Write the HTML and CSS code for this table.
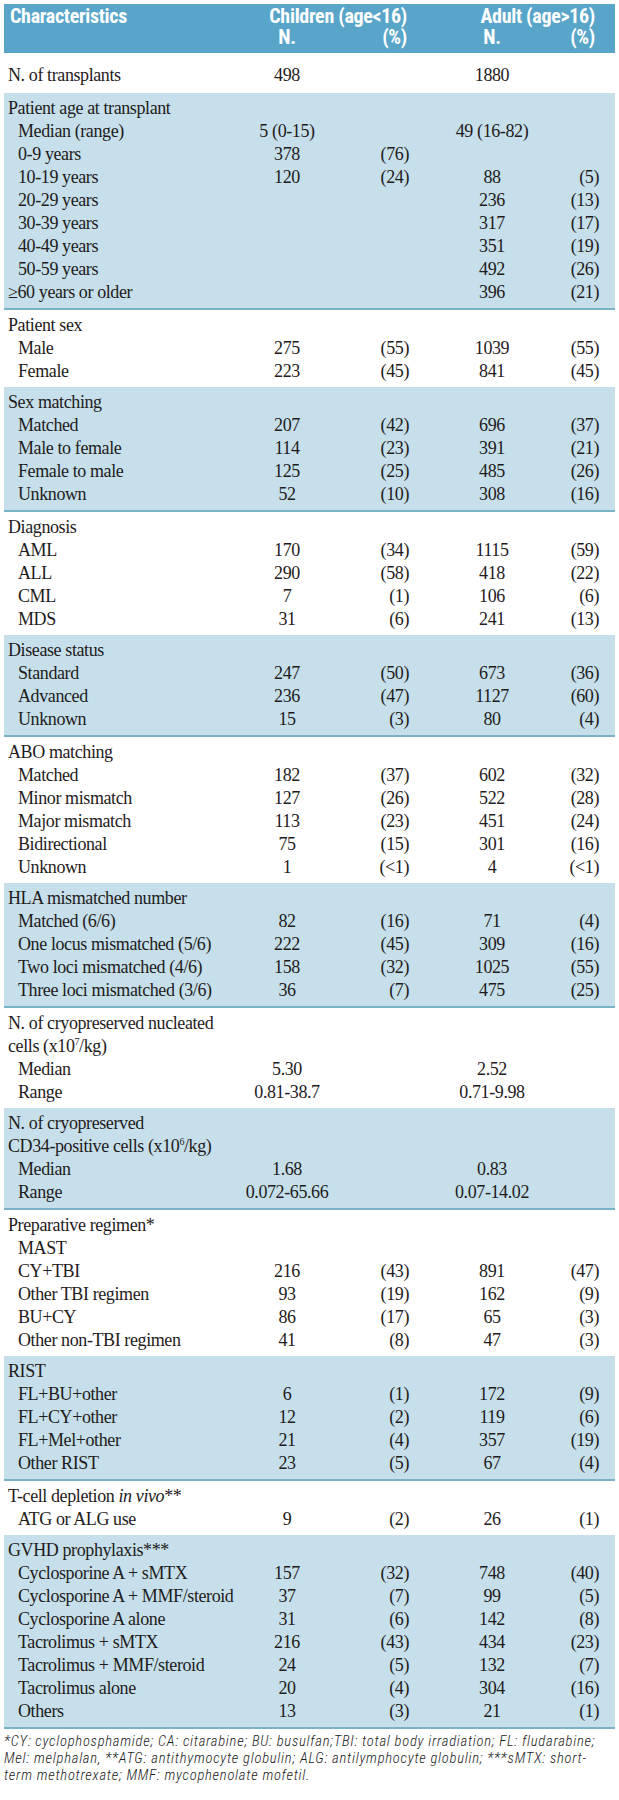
FILE: index.html
```html
<!DOCTYPE html>
<html lang="en">
<head>
<meta charset="utf-8">
<title>Patient characteristics</title>
<link rel="stylesheet" href="styles.css">
</head>
<body>
<div class="page">
<table class="chars">
  <colgroup>
    <col class="c-label">
    <col class="c-n1">
    <col class="c-p1">
    <col class="c-n2">
    <col class="c-p2">
  </colgroup>
  <thead>
    <tr class="h1">
      <th class="lab">Characteristics</th>
      <th class="grp1" colspan="2">Children (age&lt;16)</th>
      <th class="grp2" colspan="2">Adult (age&gt;16)</th>
    </tr>
    <tr class="h2">
      <th></th>
      <th class="n">N.</th>
      <th class="p1">(%)</th>
      <th class="n2">N.</th>
      <th class="p2">(%)</th>
    </tr>
  </thead>
  <tbody class="sec first">
    <tr><td class="lab">N. of transplants</td><td class="n">498</td><td class="p"></td><td class="n2">1880</td><td class="p2"></td></tr>
  </tbody>
  <tbody class="sec shade">
    <tr><td class="lab">Patient age at transplant</td><td></td><td></td><td></td><td></td></tr>
    <tr><td class="lab sub">Median (range)</td><td class="n">5 (0-15)</td><td class="p"></td><td class="n2">49 (16-82)</td><td class="p2"></td></tr>
    <tr><td class="lab sub">0-9 years</td><td class="n">378</td><td class="p">(76)</td><td class="n2"></td><td class="p2"></td></tr>
    <tr><td class="lab sub">10-19 years</td><td class="n">120</td><td class="p">(24)</td><td class="n2">88</td><td class="p2">(5)</td></tr>
    <tr><td class="lab sub">20-29 years</td><td class="n"></td><td class="p"></td><td class="n2">236</td><td class="p2">(13)</td></tr>
    <tr><td class="lab sub">30-39 years</td><td class="n"></td><td class="p"></td><td class="n2">317</td><td class="p2">(17)</td></tr>
    <tr><td class="lab sub">40-49 years</td><td class="n"></td><td class="p"></td><td class="n2">351</td><td class="p2">(19)</td></tr>
    <tr><td class="lab sub">50-59 years</td><td class="n"></td><td class="p"></td><td class="n2">492</td><td class="p2">(26)</td></tr>
    <tr><td class="lab">≥60 years or older</td><td class="n"></td><td class="p"></td><td class="n2">396</td><td class="p2">(21)</td></tr>
  </tbody>
  <tbody class="sec">
    <tr><td class="lab">Patient sex</td><td></td><td></td><td></td><td></td></tr>
    <tr><td class="lab sub">Male</td><td class="n">275</td><td class="p">(55)</td><td class="n2">1039</td><td class="p2">(55)</td></tr>
    <tr><td class="lab sub">Female</td><td class="n">223</td><td class="p">(45)</td><td class="n2">841</td><td class="p2">(45)</td></tr>
  </tbody>
  <tbody class="sec shade">
    <tr><td class="lab">Sex matching</td><td></td><td></td><td></td><td></td></tr>
    <tr><td class="lab sub">Matched</td><td class="n">207</td><td class="p">(42)</td><td class="n2">696</td><td class="p2">(37)</td></tr>
    <tr><td class="lab sub">Male to female</td><td class="n">114</td><td class="p">(23)</td><td class="n2">391</td><td class="p2">(21)</td></tr>
    <tr><td class="lab sub">Female to male</td><td class="n">125</td><td class="p">(25)</td><td class="n2">485</td><td class="p2">(26)</td></tr>
    <tr><td class="lab sub">Unknown</td><td class="n">52</td><td class="p">(10)</td><td class="n2">308</td><td class="p2">(16)</td></tr>
  </tbody>
  <tbody class="sec">
    <tr><td class="lab">Diagnosis</td><td></td><td></td><td></td><td></td></tr>
    <tr><td class="lab sub">AML</td><td class="n">170</td><td class="p">(34)</td><td class="n2">1115</td><td class="p2">(59)</td></tr>
    <tr><td class="lab sub">ALL</td><td class="n">290</td><td class="p">(58)</td><td class="n2">418</td><td class="p2">(22)</td></tr>
    <tr><td class="lab sub">CML</td><td class="n">7</td><td class="p">(1)</td><td class="n2">106</td><td class="p2">(6)</td></tr>
    <tr><td class="lab sub">MDS</td><td class="n">31</td><td class="p">(6)</td><td class="n2">241</td><td class="p2">(13)</td></tr>
  </tbody>
  <tbody class="sec shade">
    <tr><td class="lab">Disease status</td><td></td><td></td><td></td><td></td></tr>
    <tr><td class="lab sub">Standard</td><td class="n">247</td><td class="p">(50)</td><td class="n2">673</td><td class="p2">(36)</td></tr>
    <tr><td class="lab sub">Advanced</td><td class="n">236</td><td class="p">(47)</td><td class="n2">1127</td><td class="p2">(60)</td></tr>
    <tr><td class="lab sub">Unknown</td><td class="n">15</td><td class="p">(3)</td><td class="n2">80</td><td class="p2">(4)</td></tr>
  </tbody>
  <tbody class="sec">
    <tr><td class="lab">ABO matching</td><td></td><td></td><td></td><td></td></tr>
    <tr><td class="lab sub">Matched</td><td class="n">182</td><td class="p">(37)</td><td class="n2">602</td><td class="p2">(32)</td></tr>
    <tr><td class="lab sub">Minor mismatch</td><td class="n">127</td><td class="p">(26)</td><td class="n2">522</td><td class="p2">(28)</td></tr>
    <tr><td class="lab sub">Major mismatch</td><td class="n">113</td><td class="p">(23)</td><td class="n2">451</td><td class="p2">(24)</td></tr>
    <tr><td class="lab sub">Bidirectional</td><td class="n">75</td><td class="p">(15)</td><td class="n2">301</td><td class="p2">(16)</td></tr>
    <tr><td class="lab sub">Unknown</td><td class="n">1</td><td class="p">(&lt;1)</td><td class="n2">4</td><td class="p2">(&lt;1)</td></tr>
  </tbody>
  <tbody class="sec shade">
    <tr><td class="lab">HLA mismatched number</td><td></td><td></td><td></td><td></td></tr>
    <tr><td class="lab sub">Matched (6/6)</td><td class="n">82</td><td class="p">(16)</td><td class="n2">71</td><td class="p2">(4)</td></tr>
    <tr><td class="lab sub">One locus mismatched (5/6)</td><td class="n">222</td><td class="p">(45)</td><td class="n2">309</td><td class="p2">(16)</td></tr>
    <tr><td class="lab sub">Two loci mismatched (4/6)</td><td class="n">158</td><td class="p">(32)</td><td class="n2">1025</td><td class="p2">(55)</td></tr>
    <tr><td class="lab sub">Three loci mismatched (3/6)</td><td class="n">36</td><td class="p">(7)</td><td class="n2">475</td><td class="p2">(25)</td></tr>
  </tbody>
  <tbody class="sec">
    <tr><td class="lab">N. of cryopreserved nucleated<br>cells (x10<sup>7</sup>/kg)</td><td></td><td></td><td></td><td></td></tr>
    <tr><td class="lab sub">Median</td><td class="n">5.30</td><td class="p"></td><td class="n2">2.52</td><td class="p2"></td></tr>
    <tr><td class="lab sub">Range</td><td class="n">0.81-38.7</td><td class="p"></td><td class="n2">0.71-9.98</td><td class="p2"></td></tr>
  </tbody>
  <tbody class="sec shade">
    <tr><td class="lab">N. of cryopreserved<br>CD34-positive cells (x10<sup>6</sup>/kg)</td><td></td><td></td><td></td><td></td></tr>
    <tr><td class="lab sub">Median</td><td class="n">1.68</td><td class="p"></td><td class="n2">0.83</td><td class="p2"></td></tr>
    <tr><td class="lab sub">Range</td><td class="n">0.072-65.66</td><td class="p"></td><td class="n2">0.07-14.02</td><td class="p2"></td></tr>
  </tbody>
  <tbody class="sec">
    <tr><td class="lab">Preparative regimen*</td><td></td><td></td><td></td><td></td></tr>
    <tr><td class="lab sub">MAST</td><td></td><td></td><td></td><td></td></tr>
    <tr><td class="lab sub">CY+TBI</td><td class="n">216</td><td class="p">(43)</td><td class="n2">891</td><td class="p2">(47)</td></tr>
    <tr><td class="lab sub">Other TBI regimen</td><td class="n">93</td><td class="p">(19)</td><td class="n2">162</td><td class="p2">(9)</td></tr>
    <tr><td class="lab sub">BU+CY</td><td class="n">86</td><td class="p">(17)</td><td class="n2">65</td><td class="p2">(3)</td></tr>
    <tr><td class="lab sub">Other non-TBI regimen</td><td class="n">41</td><td class="p">(8)</td><td class="n2">47</td><td class="p2">(3)</td></tr>
  </tbody>
  <tbody class="sec shade">
    <tr><td class="lab">RIST</td><td></td><td></td><td></td><td></td></tr>
    <tr><td class="lab sub">FL+BU+other</td><td class="n">6</td><td class="p">(1)</td><td class="n2">172</td><td class="p2">(9)</td></tr>
    <tr><td class="lab sub">FL+CY+other</td><td class="n">12</td><td class="p">(2)</td><td class="n2">119</td><td class="p2">(6)</td></tr>
    <tr><td class="lab sub">FL+Mel+other</td><td class="n">21</td><td class="p">(4)</td><td class="n2">357</td><td class="p2">(19)</td></tr>
    <tr><td class="lab sub">Other RIST</td><td class="n">23</td><td class="p">(5)</td><td class="n2">67</td><td class="p2">(4)</td></tr>
  </tbody>
  <tbody class="sec">
    <tr><td class="lab">T-cell depletion <i>in vivo</i>**</td><td></td><td></td><td></td><td></td></tr>
    <tr><td class="lab sub">ATG or ALG use</td><td class="n">9</td><td class="p">(2)</td><td class="n2">26</td><td class="p2">(1)</td></tr>
  </tbody>
  <tbody class="sec shade">
    <tr><td class="lab">GVHD prophylaxis***</td><td></td><td></td><td></td><td></td></tr>
    <tr><td class="lab sub">Cyclosporine A + sMTX</td><td class="n">157</td><td class="p">(32)</td><td class="n2">748</td><td class="p2">(40)</td></tr>
    <tr><td class="lab sub">Cyclosporine A + MMF/steroid</td><td class="n">37</td><td class="p">(7)</td><td class="n2">99</td><td class="p2">(5)</td></tr>
    <tr><td class="lab sub">Cyclosporine A alone</td><td class="n">31</td><td class="p">(6)</td><td class="n2">142</td><td class="p2">(8)</td></tr>
    <tr><td class="lab sub">Tacrolimus + sMTX</td><td class="n">216</td><td class="p">(43)</td><td class="n2">434</td><td class="p2">(23)</td></tr>
    <tr><td class="lab sub">Tacrolimus + MMF/steroid</td><td class="n">24</td><td class="p">(5)</td><td class="n2">132</td><td class="p2">(7)</td></tr>
    <tr><td class="lab sub">Tacrolimus alone</td><td class="n">20</td><td class="p">(4)</td><td class="n2">304</td><td class="p2">(16)</td></tr>
    <tr><td class="lab sub">Others</td><td class="n">13</td><td class="p">(3)</td><td class="n2">21</td><td class="p2">(1)</td></tr>
  </tbody>
</table>
<p class="foot">*CY: cyclophosphamide; CA: citarabine; BU: busulfan;TBI: total body irradiation; FL: fludarabine;<br>Mel: melphalan, **ATG: antithymocyte globulin; ALG: antilymphocyte globulin; ***sMTX: short-<br>term methotrexate; MMF: mycophenolate mofetil.</p>
</div>
</body>
</html>
```
FILE: styles.css
```css
html, body {
  margin: 0;
  padding: 0;
  background: #ffffff;
}

.page {
  padding: 4px 4px 0 4px;
  width: 611px;
}

.chars {
  width: 611px;
  table-layout: fixed;
  border-collapse: collapse;
  border-spacing: 0;
  font-family: "Liberation Serif", "Times New Roman", serif;
  font-size: 18px;
  letter-spacing: -0.4px;
  color: #1f1b1c;
}

.c-label { width: 210px; }
.c-n1 { width: 146px; }
.c-p1 { width: 51px; }
.c-n2 { width: 144px; }
.c-p2 { width: 60px; }

.chars th,
.chars td {
  padding: 0;
  white-space: nowrap;
  line-height: 23px;
  font-weight: normal;
  vertical-align: top;
}

/* header */
.chars thead {
  background: #58a5c9;
  color: #ffffff;
}

.chars thead th {
  font-family: "Roboto", "Liberation Sans", sans-serif;
  font-stretch: condensed;
  font-weight: bold;
  font-size: 20px;
  letter-spacing: -0.3px;
  line-height: 21px;
}

.chars .h1 th { padding-top: 2px; }
.chars .h2 th { padding-bottom: 5px; }

.chars thead .lab { text-align: left; padding-left: 6px; }
.chars .grp1 { text-align: right; padding-right: 4px; }
.chars .grp2 { text-align: right; padding-right: 20px; }
.chars thead .n { text-align: center; }
.chars thead .p1 { text-align: right; padding-right: 4px; }
.chars thead .n2 { text-align: center; padding-left: 18px; }
.chars thead .p2 { text-align: right; padding-right: 20px; }

/* body cells */
.chars td.lab { text-align: left; padding-left: 4px; }
.chars td.sub { padding-left: 14px; }
.chars td.n { text-align: center; }
.chars td.p { text-align: right; padding-right: 2px; }
.chars td.n2 { text-align: center; padding-left: 18px; }
.chars td.p2 { text-align: right; padding-right: 16px; }

.chars sup {
  font-size: 10px;
  line-height: 0;
  vertical-align: 7px;
}

/* sections */
.sec tr:first-child td { padding-top: 4px; }
.sec tr:last-child td { padding-bottom: 4px; }
.sec.first tr:first-child td { padding-top: 11px; padding-bottom: 6px; }

.shade { background: #c6dfea; }
.shade tr:last-child td { border-bottom: 2px solid #7ab2c8; }

/* footnote */
.foot {
  margin: 4px 0 0 0;
  font-family: "Roboto", "Liberation Sans", sans-serif;
  font-stretch: condensed;
  font-weight: 300;
  font-style: italic;
  font-size: 14.6px;
  letter-spacing: 0.75px;
  line-height: 17px;
  color: #1a1a1a;
  white-space: nowrap;
}
```
